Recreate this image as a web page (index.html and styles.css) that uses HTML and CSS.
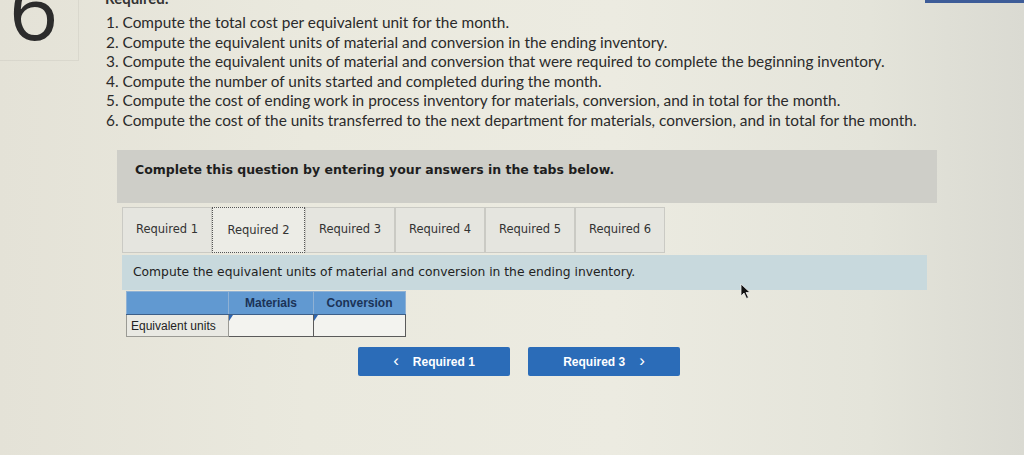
FILE: index.html
```html
<!DOCTYPE html>
<html>
<head>
<meta charset="utf-8">
<link rel="stylesheet" href="styles.css">
</head>
<body>
<div class="topbar"></div>
<div class="top">
  <div class="num"><span>6</span></div>
  <div class="req">
    <div class="req-title">Required:</div>
    <ol class="req-list">
      <li>1. Compute the total cost per equivalent unit for the month.</li>
      <li>2. Compute the equivalent units of material and conversion in the ending inventory.</li>
      <li>3. Compute the equivalent units of material and conversion that were required to complete the beginning inventory.</li>
      <li>4. Compute the number of units started and completed during the month.</li>
      <li>5. Compute the cost of ending work in process inventory for materials, conversion, and in total for the month.</li>
      <li>6. Compute the cost of the units transferred to the next department for materials, conversion, and in total for the month.</li>
    </ol>
  </div>
</div>

<div class="panel">
  <div class="instr">Complete this question by entering your answers in the tabs below.</div>
  <div class="tabs">
    <div class="tab">Required 1</div>
    <div class="tab active">Required 2</div>
    <div class="tab">Required 3</div>
    <div class="tab">Required 4</div>
    <div class="tab">Required 5</div>
    <div class="tab">Required 6</div>
  </div>
  <div class="prompt">Compute the equivalent units of material and conversion in the ending inventory.</div>
  <table class="grid">
    <tr class="head">
      <th class="c1"></th>
      <th class="c2">Materials</th>
      <th class="c3">Conversion</th>
    </tr>
    <tr>
      <td class="label">Equivalent units</td>
      <td class="input"><span class="mark"></span></td>
      <td class="input"><span class="mark"></span></td>
    </tr>
  </table>
  <div class="nav">
    <button class="btn"><span class="chev">&lsaquo;</span>Required 1</button>
    <button class="btn">Required 3<span class="chev right">&rsaquo;</span></button>
  </div>
</div>

<svg class="cursor" width="12" height="17" viewBox="0 0 12 17"><path d="M1 1 L1 13 L4 10 L6.5 15.5 L8.5 14.5 L6 9.5 L10 9.5 Z" fill="#111" stroke="#eee" stroke-width="0.8"/></svg>
</body>
</html>
```

FILE: styles.css
```css
html, body {
  margin: 0;
  padding: 0;
}
body {
  width: 1024px;
  height: 455px;
  overflow: hidden;
  position: relative;
  background: linear-gradient(90deg, #e4e2d7 0%, #eae9de 30%, #ecebe1 60%, #e4e4da 85%, #dadad2 100%);
  font-family: "Lato", "Open Sans", sans-serif;
  color: #2b2b2b;
}
.topbar {
  position: absolute;
  top: 0;
  right: 0;
  width: 99px;
  height: 3px;
  background: #3d5c98;
}
.top {
  display: flex;
}
.num {
  width: 78px;
  height: 60px;
  flex: none;
  border-right: 1px solid rgba(0,0,0,0.05);
  border-bottom: 1px solid rgba(0,0,0,0.05);
  overflow: hidden;
  margin-right: 26px;
}
.num span {
  display: block;
  font-family: "Open Sans", sans-serif;
  font-weight: 500;
  font-size: 86px;
  line-height: 86px;
  margin-top: -36px;
  margin-left: 9px;
  color: #2c2c2c;
}
.req-title {
  font-weight: 700;
  font-size: 15px;
  line-height: 18px;
  margin-top: -11px;
  height: 18px;
  color: #333;
}
.req-list {
  list-style: none;
  margin: 6px 0 0 1px;
  padding: 0;
  font-size: 15.4px;
  line-height: 19.5px;
}
.panel {
  margin-left: 117px;
  width: 820px;
  margin-top: 20px;
}
.instr {
  height: 53px;
  background: #cecec8;
  box-sizing: border-box;
  padding-left: 18px;
  display: flex;
  align-items: center;
  font-family: "DejaVu Sans", Verdana, sans-serif;
  font-weight: 700;
  font-size: 12.5px;
  color: #1e1e1e;
  padding-bottom: 14px;
}
.tabs {
  display: flex;
  margin: 4px 0 0 5px;
}
.tab {
  width: 90px;
  height: 46px;
  box-sizing: border-box;
  border: 1px solid #cacac4;
  background: #e5e5df;
  display: flex;
  align-items: center;
  justify-content: center;
  font-family: "DejaVu Sans", Verdana, sans-serif;
  font-size: 11.5px;
  color: #333;
  padding-bottom: 3px;
}
.tab.active {
  width: 93px;
  background: #ecece6;
  border: 1px dotted #555;
  padding-bottom: 0;
}
.prompt {
  margin: 2px 10px 0 5px;
  height: 35px;
  background: #c8d9dd;
  box-sizing: border-box;
  padding-left: 11px;
  padding-bottom: 2px;
  display: flex;
  align-items: center;
  font-family: "DejaVu Sans", Verdana, sans-serif;
  font-size: 12.3px;
  color: #222;
}
.grid {
  margin: 1px 0 0 9px;
  border-collapse: collapse;
  font-family: "Liberation Sans", Arial, sans-serif;
  font-size: 12px;
}
.grid th {
  background: #6199d1;
  color: #1b3357;
  font-weight: 700;
  height: 22px;
  padding: 0;
  border: 1px solid #8fb1d4;
  border-bottom-color: #3d5f88;
}
.grid .c1 { width: 101px; }
.grid .c2 { width: 84px; }
.grid .c3 { width: 91px; }
.grid td {
  height: 21px;
  padding: 0;
  border: 1px solid #6b6b6b;
}
.grid .label {
  background: #e9e9e3;
  padding-left: 4px;
  color: #222;
  border-color: #9a9a94;
}
.grid .input {
  background: #f3f3ef;
  position: relative;
  border: 1.5px solid #5a5a5a;
}
.mark {
  position: absolute;
  top: 0;
  left: 0;
  width: 0;
  height: 0;
  border-top: 6px solid #2f66b0;
  border-right: 4px solid transparent;
}
.nav {
  display: flex;
  justify-content: center;
  gap: 18px;
  margin: 10px 0 0 -16px;
}
.btn {
  width: 152px;
  height: 29px;
  border: none;
  border-radius: 2px;
  background: #2b6cb8;
  color: #fff;
  font-family: "Liberation Sans", Arial, sans-serif;
  font-weight: 700;
  font-size: 12px;
  display: flex;
  align-items: center;
  justify-content: center;
  padding: 0;
}
.chev {
  font-size: 17px;
  font-weight: 400;
  margin-right: 14px;
  margin-top: -2px;
}
.chev.right {
  margin-right: 0;
  margin-left: 14px;
}
.cursor {
  position: absolute;
  left: 740px;
  top: 283px;
}
```
